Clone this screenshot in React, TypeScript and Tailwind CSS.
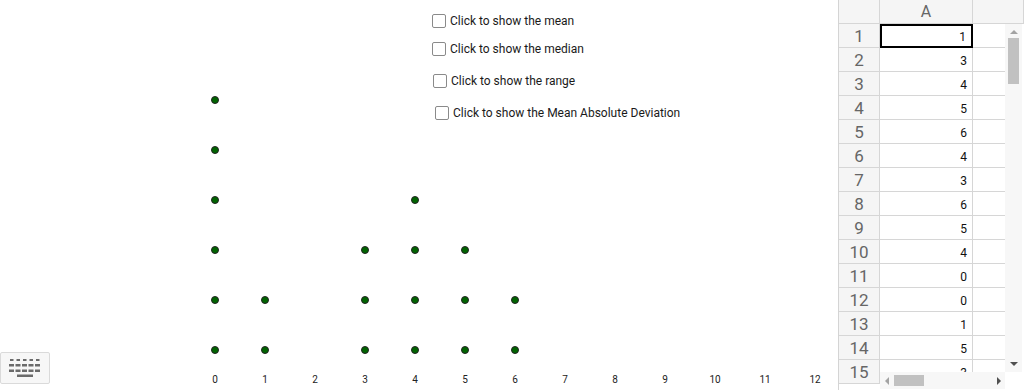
import React from 'react'

const font = { fontFamily: 'Roboto, "Liberation Sans", sans-serif' }

// dot plot counts per value
const counts: Record<number, number> = { 0: 6, 1: 2, 3: 3, 4: 4, 5: 3, 6: 2 }
const values = [1, 3, 4, 5, 6, 4, 3, 6, 5, 4, 0, 0, 1, 5, 3]

const options = [
  { label: 'Click to show the mean', cls: 'top-[13px] left-[432px]' },
  { label: 'Click to show the median', cls: 'top-[41px] left-[432px]' },
  { label: 'Click to show the range', cls: 'top-[73px] left-[433px]' },
  { label: 'Click to show the Mean Absolute Deviation', cls: 'top-[105px] left-[435px]' },
]

function KeyboardIcon() {
  return (
    <svg width="32" height="18" viewBox="0 0 32 18" fill="#6b6b6b">
      {[0, 6.5, 13, 19.5, 26].map((x) => (
        <rect key={'a' + x} x={x + 1} y={0} width={3.5} height={2} />
      ))}
      {[0, 6.5, 13, 19.5, 26].map((x) => (
        <rect key={'b' + x} x={x} y={5} width={5} height={2.5} />
      ))}
      {[0, 6.5, 13, 19.5, 26].map((x) => (
        <rect key={'c' + x} x={x} y={10.5} width={5} height={2.5} />
      ))}
      <rect x={8} y={15.5} width={16} height={2.5} />
    </svg>
  )
}

function Graphics() {
  const dots: { x: number; y: number }[] = []
  Object.entries(counts).forEach(([v, n]) => {
    for (let i = 0; i < n; i++) dots.push({ x: 215 + Number(v) * 50, y: 350 - i * 50 })
  })
  return (
    <div className="relative w-[838px] h-[390px] bg-white">
      {options.map((o) => (
        <label key={o.label} className={`absolute ${o.cls} flex items-center gap-[4px] text-[12px] text-[#1a1a1a]`}>
          <span className="w-[14px] h-[14px] border border-[#8a8a8a] rounded-[2px] bg-white" />
          <span className="leading-[14px] pt-[1px]">{o.label}</span>
        </label>
      ))}
      {dots.map((d, i) => (
        <span
          key={i}
          className="absolute w-[8px] h-[8px] rounded-full bg-[#006400] border border-[#222]"
          style={{ left: d.x - 4, top: d.y - 4 }}
        />
      ))}
      {Array.from({ length: 13 }, (_, i) => (
        <span
          key={i}
          className="absolute top-[373px] w-[20px] text-center text-[10px] text-[#222] leading-[14px]"
          style={{ left: 215 + i * 50 - 10 }}
        >
          {i}
        </span>
      ))}
      <button className="absolute left-0 top-[352px] w-[50px] h-[32px] bg-[#f7f7f7] border border-[#dadada] rounded-[2px] flex items-center justify-center">
        <KeyboardIcon />
      </button>
    </div>
  )
}

function Spreadsheet() {
  return (
    <div className="relative w-[186px] h-[390px] border-l border-[#d4d4d4] bg-white overflow-hidden">
      {/* header row */}
      <div className="flex h-[24px] bg-[#f5f5f5] border-b border-[#d6d6d6]">
        <div className="w-[41px] border-r border-[#d6d6d6]" />
        <div className="w-[93px] border-r border-[#d6d6d6] flex items-center justify-center pt-[1px] text-[16px] text-[#666]">A</div>
        <div className="flex-1 border-r border-[#d6d6d6]" />
      </div>
      <div className="flex">
        <div className="flex flex-col">
          {values.map((v, i) => (
            <div key={i} className="flex h-[24px]">
              <div className="w-[41px] bg-[#f5f5f5] border-r border-b border-[#d6d6d6] flex items-center justify-center pt-[3px] text-[17px] text-[#666]">
                {i + 1}
              </div>
              <div
                className={`w-[93px] flex items-center justify-end pr-[5px] pt-[2px] text-[12px] text-[#111] ${
                  i === 0 ? 'border-2 border-black' : 'border-r border-b border-[#d6d6d6]'
                }`}
              >
                {v}
              </div>
              <div className="w-[32px] border-b border-[#d6d6d6]" />
            </div>
          ))}
        </div>
        {/* vertical scrollbar */}
        <div className="w-[17px] h-[348px] bg-[#f7f7f7] flex flex-col items-center">
          <span className="mt-[6px] w-0 h-0 border-l-[4px] border-r-[4px] border-b-[4px] border-l-transparent border-r-transparent border-b-[#a3a3a3]" />
          <span className="mt-[4px] w-[11px] h-[46px] bg-[#c1c1c1]" />
          <span className="mt-auto mb-[6px] w-0 h-0 border-l-[4px] border-r-[4px] border-t-[4px] border-l-transparent border-r-transparent border-t-[#505050]" />
        </div>
      </div>
      {/* horizontal scrollbar */}
      <div className="absolute left-[41px] top-[372px] w-[125px] h-[17px] bg-[#f7f7f7] flex items-center">
        <span className="ml-[5px] w-0 h-0 border-t-[4px] border-b-[4px] border-r-[4px] border-t-transparent border-b-transparent border-r-[#a3a3a3]" />
        <span className="ml-[5px] w-[30px] h-[11px] bg-[#c1c1c1]" />
        <span className="ml-auto mr-[4px] w-0 h-0 border-t-[4px] border-b-[4px] border-l-[4px] border-t-transparent border-b-transparent border-l-[#505050]" />
      </div>
    </div>
  )
}

export default function App() {
  return (
    <div className="flex w-[1024px] h-[390px] overflow-hidden bg-white" style={font}>
      <Graphics />
      <Spreadsheet />
    </div>
  )
}
